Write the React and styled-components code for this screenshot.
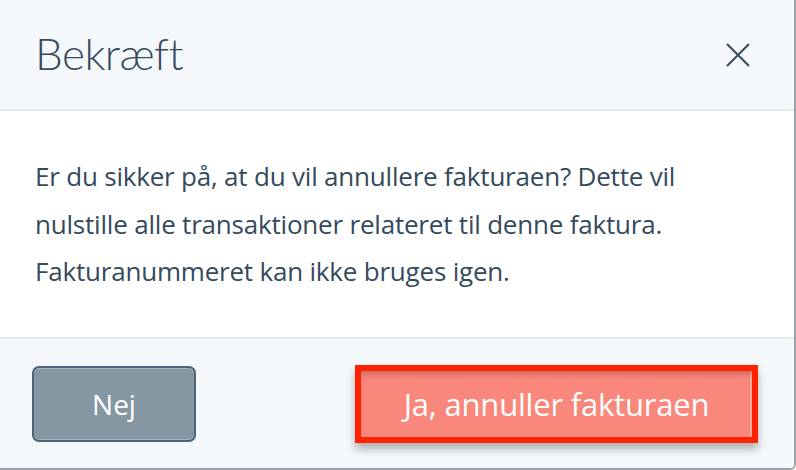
import * as React from "react"
import styled, { createGlobalStyle } from "styled-components"

const GlobalStyle = createGlobalStyle`
  html, body {
    margin: 0;
    padding: 0;
    background: #ffffff;
  }
  body {
    font-family: "Open Sans", "Noto Sans", sans-serif;
  }
`

const Modal = styled.div`
  width: 796px;
  height: 470px;
  box-sizing: border-box;
  display: flex;
  flex-direction: column;
  background: #ffffff;
  border-right: 2px solid #9ba1a6;
  border-bottom: 2px solid #9ba1a6;
  border-bottom-right-radius: 6px;
  overflow: hidden;
  color: #344a5d;
`

const Header = styled.div`
  height: 109px;
  flex: none;
  display: flex;
  align-items: center;
  justify-content: space-between;
  padding: 0 42px 0 35px;
  background: #f5f8fb;
  border-bottom: 2px solid #e4eaf0;
`

const Title = styled.h1`
  margin: 0;
  padding-bottom: 4px;
  font-family: "Lato", "Open Sans", sans-serif;
  font-weight: 300;
  font-size: 44px;
  letter-spacing: -0.5px;
  color: #364b5e;
`

const CloseButton = styled.button`
  border: 0;
  background: none;
  padding: 0;
  width: 28px;
  height: 28px;
  display: flex;
  align-items: center;
  justify-content: center;
  cursor: pointer;
  color: #3a4b59;
`

const Body = styled.div`
  flex: 1;
  padding: 42px 30px 0 35px;
  font-family: "Open Sans", "Noto Sans", sans-serif;
  font-size: 26px;
  line-height: 47.5px;
  letter-spacing: -0.2px;
  color: #344a5d;
  white-space: nowrap;
`

const Footer = styled.div`
  height: 131px;
  flex: none;
  box-sizing: border-box;
  display: flex;
  align-items: center;
  justify-content: space-between;
  padding: 0 36px 0 32px;
  background: #f5f8fb;
  border-top: 2px solid #e4eaf0;
`

const Button = styled.button`
  font-family: "Open Sans", "Noto Sans", sans-serif;
  color: #ffffff;
  cursor: pointer;
  box-sizing: border-box;
`

const CancelButton = styled(Button)`
  width: 164px;
  height: 76px;
  border: 2px solid #4c6377;
  border-radius: 7px;
  background: #8697a4;
  box-shadow: inset 0 1px 0 #a7b4be, inset 0 -1px 0 #a7b4be;
  font-size: 28px;
`

const ConfirmButton = styled(Button)`
  width: 403px;
  height: 78px;
  border: 6px solid #ff2200;
  border-radius: 0;
  background: #fa877c;
  box-shadow: inset 0 6px 6px -3px rgba(150, 60, 50, 0.45),
    inset -2px 0 0 #f6b1aa, 0 6px 8px rgba(40, 40, 40, 0.35);
  font-size: 31px;
  letter-spacing: -0.2px;
`

const CloseIcon = () => (
  <svg width="24" height="24" viewBox="0 0 24 24" fill="none">
    <path d="M1 1L23 23M23 1L1 23" stroke="currentColor" strokeWidth="2" />
  </svg>
)

const App = () => {
  return (
    <>
      <GlobalStyle />
      <Modal>
        <Header>
          <Title>Bekræft</Title>
          <CloseButton aria-label="Luk">
            <CloseIcon />
          </CloseButton>
        </Header>
        <Body>
          Er du sikker på, at du vil annullere fakturaen? Dette vil
          <br />
          nulstille alle transaktioner relateret til denne faktura.
          <br />
          Fakturanummeret kan ikke bruges igen.
        </Body>
        <Footer>
          <CancelButton>Nej</CancelButton>
          <ConfirmButton>Ja, annuller fakturaen</ConfirmButton>
        </Footer>
      </Modal>
    </>
  )
}

export default App
